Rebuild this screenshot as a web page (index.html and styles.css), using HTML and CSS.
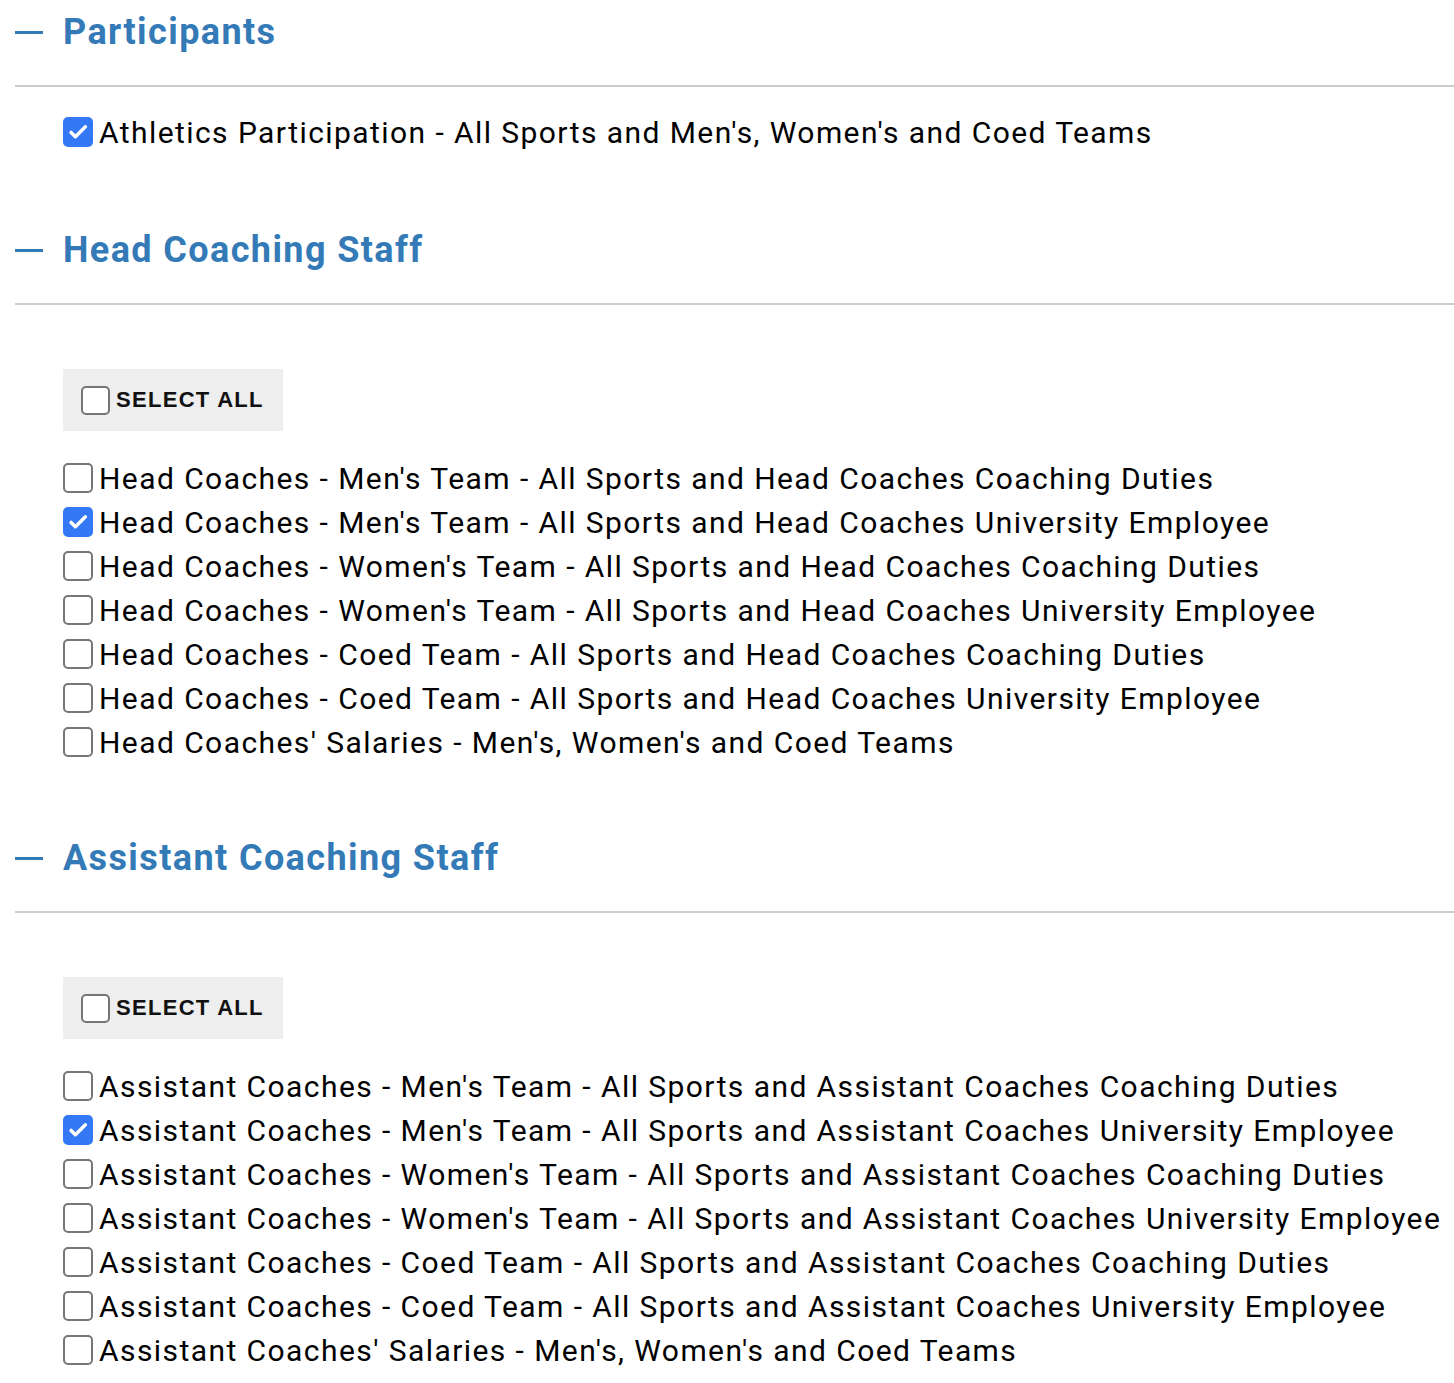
FILE: index.html
```html
<!DOCTYPE html>
<html lang="en">
<head>
<meta charset="utf-8">
<title>Report options</title>
<link rel="stylesheet" href="styles.css">
</head>
<body>
<div class="page">
  <section class="group">
    <h2 class="group-title"><span class="toggle"></span>Participants</h2>
    <hr class="rule">
    <div class="group-body">
      <ul class="options">
        <li><label class="opt"><input type="checkbox" checked><span>Athletics Participation - All Sports and Men's, Women's and Coed Teams</span></label></li>
      </ul>
    </div>
  </section>

  <section class="group">
    <h2 class="group-title"><span class="toggle"></span>Head Coaching Staff</h2>
    <hr class="rule">
    <div class="group-body">
      <div class="select-all"><label class="opt-all"><input type="checkbox"><span>SELECT ALL</span></label></div>
      <ul class="options">
        <li><label class="opt"><input type="checkbox"><span>Head Coaches - Men's Team - All Sports and Head Coaches Coaching Duties</span></label></li>
        <li><label class="opt"><input type="checkbox" checked><span>Head Coaches - Men's Team - All Sports and Head Coaches University Employee</span></label></li>
        <li><label class="opt"><input type="checkbox"><span>Head Coaches - Women's Team - All Sports and Head Coaches Coaching Duties</span></label></li>
        <li><label class="opt"><input type="checkbox"><span>Head Coaches - Women's Team - All Sports and Head Coaches University Employee</span></label></li>
        <li><label class="opt"><input type="checkbox"><span>Head Coaches - Coed Team - All Sports and Head Coaches Coaching Duties</span></label></li>
        <li><label class="opt"><input type="checkbox"><span>Head Coaches - Coed Team - All Sports and Head Coaches University Employee</span></label></li>
        <li><label class="opt"><input type="checkbox"><span>Head Coaches' Salaries - Men's, Women's and Coed Teams</span></label></li>
      </ul>
    </div>
  </section>

  <section class="group">
    <h2 class="group-title"><span class="toggle"></span>Assistant Coaching Staff</h2>
    <hr class="rule">
    <div class="group-body">
      <div class="select-all"><label class="opt-all"><input type="checkbox"><span>SELECT ALL</span></label></div>
      <ul class="options">
        <li><label class="opt"><input type="checkbox"><span>Assistant Coaches - Men's Team - All Sports and Assistant Coaches Coaching Duties</span></label></li>
        <li><label class="opt"><input type="checkbox" checked><span>Assistant Coaches - Men's Team - All Sports and Assistant Coaches University Employee</span></label></li>
        <li><label class="opt"><input type="checkbox"><span>Assistant Coaches - Women's Team - All Sports and Assistant Coaches Coaching Duties</span></label></li>
        <li><label class="opt"><input type="checkbox"><span>Assistant Coaches - Women's Team - All Sports and Assistant Coaches University Employee</span></label></li>
        <li><label class="opt"><input type="checkbox"><span>Assistant Coaches - Coed Team - All Sports and Assistant Coaches Coaching Duties</span></label></li>
        <li><label class="opt"><input type="checkbox"><span>Assistant Coaches - Coed Team - All Sports and Assistant Coaches University Employee</span></label></li>
        <li><label class="opt"><input type="checkbox"><span>Assistant Coaches' Salaries - Men's, Women's and Coed Teams</span></label></li>
      </ul>
    </div>
  </section>
</div>
</body>
</html>
```

FILE: styles.css
```css
html, body {
  margin: 0;
  padding: 0;
  background: #fff;
}
body {
  font-family: Roboto, "Liberation Sans", Arial, sans-serif;
  color: #000;
}
.page {
  padding: 10px 0 0 15px;
}
.group {
  margin-bottom: 72px;
}
.group:first-child {
  margin-bottom: 74px;
}
.group-title {
  display: flex;
  align-items: center;
  margin: 0;
  height: 44px;
  font-size: 36px;
  font-weight: 700;
  letter-spacing: 1.4px;
  color: #337ab7;
}
.toggle {
  display: inline-block;
  width: 28px;
  height: 3px;
  background: #337ab7;
  margin-right: 20px;
}
.rule {
  margin: 31px 0 0 0;
  border: 0;
  height: 2px;
  background: #ccc;
}
.group-body {
  padding: 23px 0 0 48px;
}
.select-all {
  display: flex;
  align-items: center;
  margin: 41px 0 25px 0;
  height: 62px;
  width: 220px;
  box-sizing: border-box;
  padding-left: 18px;
  background: #eee;
}
.opt-all {
  display: flex;
  align-items: center;
  gap: 6px;
  font-family: "Liberation Sans", Arial, sans-serif;
  font-size: 22px;
  font-weight: 700;
  letter-spacing: 1.3px;
  color: #111;
}
.options {
  list-style: none;
  margin: 0;
  padding: 0;
}
.opt {
  display: flex;
  align-items: center;
  gap: 6px;
  height: 44px;
  font-size: 30px;
  letter-spacing: 1.43px;
}
input[type="checkbox"] {
  appearance: none;
  -webkit-appearance: none;
  margin: 0;
  width: 30px;
  height: 30px;
  flex: none;
  box-sizing: border-box;
  border: 2px solid #767676;
  border-radius: 5px;
  background: #fff;
}
.opt-all input[type="checkbox"] {
  width: 29px;
  height: 29px;
}
input[type="checkbox"]:checked {
  border-color: #3478f6;
  background: #3478f6 url("data:image/svg+xml;utf8,<svg xmlns='http://www.w3.org/2000/svg' viewBox='0 0 30 30'><path d='M7 15.5l5 5L23.5 9' fill='none' stroke='white' stroke-width='4' stroke-linecap='round' stroke-linejoin='round'/></svg>") center / 100% 100% no-repeat;
}
```
